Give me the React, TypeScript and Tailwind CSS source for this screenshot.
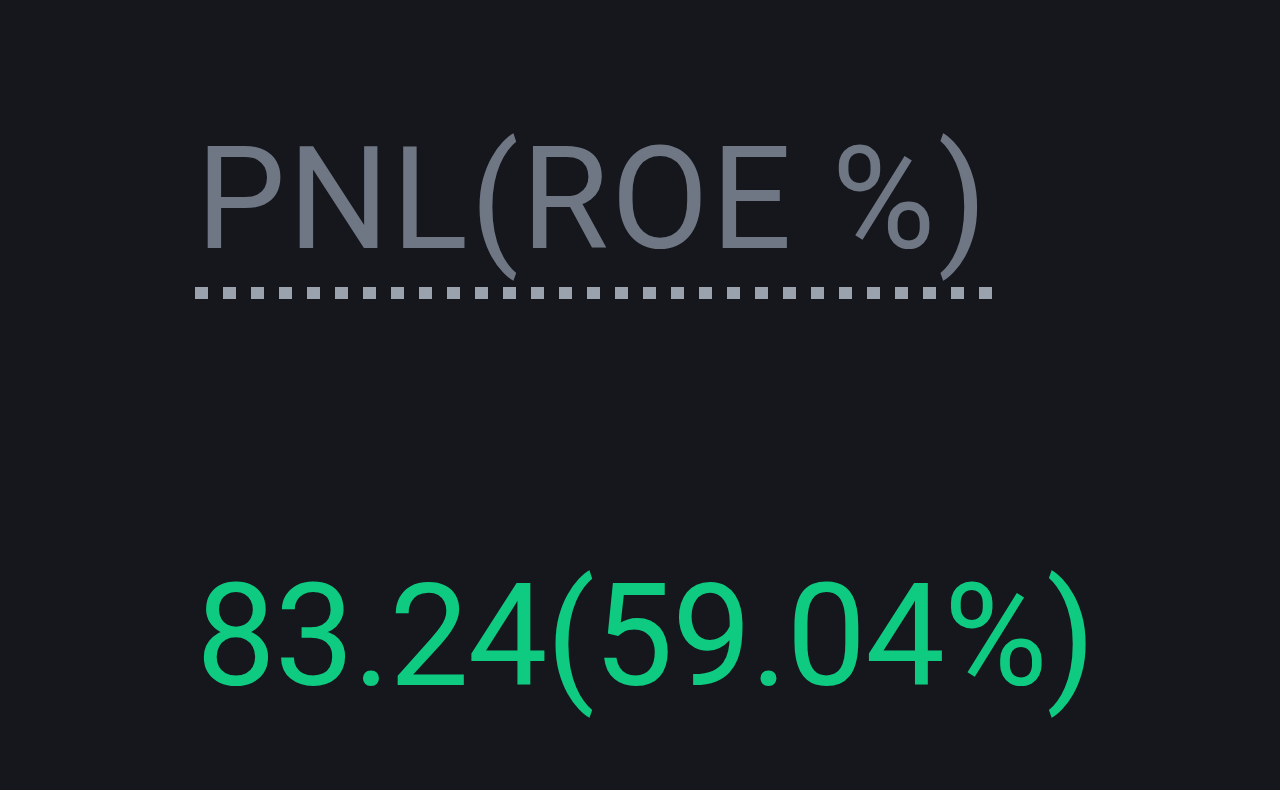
export default function App() {
  return (
    <div className="w-[1280px] h-[790px] bg-[#15171c] flex flex-col pl-[196px] pt-[122px]" style={{ fontFamily: "Roboto, 'Liberation Sans', sans-serif" }}>
      <div className="flex flex-col items-start w-fit">
        <div className="text-[142px] leading-[156px] text-[#6f7785] tracking-[2.3px]">PNL(ROE %)</div>
        <div className="-ml-[1px] mt-[9px] h-[12px] w-[798px] bg-[repeating-linear-gradient(to_right,#9aa2ad_0_13px,transparent_13px_28px)]"></div>
      </div>
      <div className="mt-[260px] text-[142px] leading-[156px] text-[#0ecb81] tracking-[-1.3px]">83.24(59.04%)</div>
    </div>
  );
}
